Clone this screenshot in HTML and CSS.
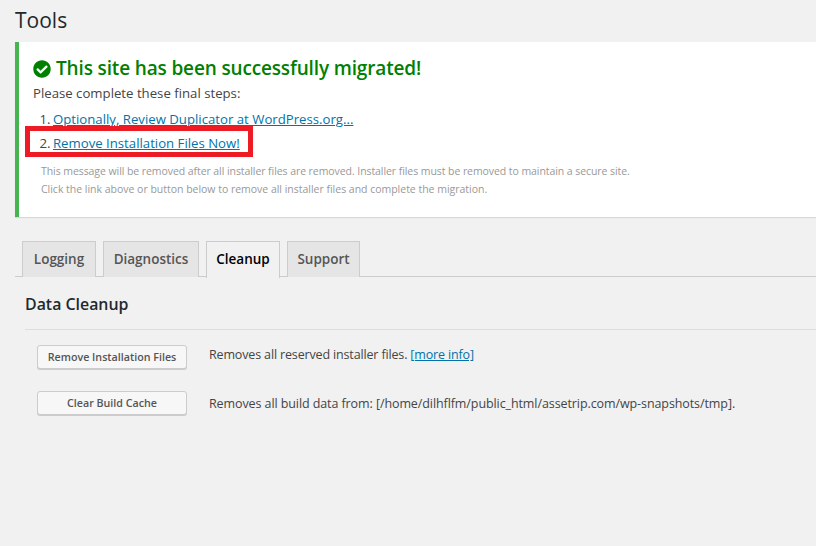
FILE: index.html
```html
<!DOCTYPE html>
<html lang="en">
<head>
<meta charset="utf-8">
<title>Tools</title>
<link rel="stylesheet" href="styles.css">
</head>
<body>
<div class="wrap">
  <h1 class="page-title">Tools</h1>
  <section class="notice">
    <h2 class="notice-title">
      <svg class="check" viewBox="0 0 512 512" aria-hidden="true"><path d="M504 256c0 137-111 248-248 248S8 393 8 256 119 8 256 8s248 111 248 248zM227.300 387.300l184-184c6.200-6.200 6.200-16.400 0-22.600l-22.600-22.600c-6.200-6.200-16.400-6.200-22.600 0L216 308.100l-70.100-70.100c-6.200-6.200-16.400-6.200-22.600 0l-22.600 22.600c-6.200 6.200-6.200 16.400 0 22.600l104 104c6.200 6.200 16.400 6.200 22.600 0z"/></svg>
      <span>This site has been successfully migrated!</span>
    </h2>
    <p class="notice-lead">Please complete these final steps:</p>
    <ol class="steps">
      <li><span class="num">1.</span> <a href="#">Optionally, Review Duplicator at WordPress.org...</a></li>
      <li class="highlighted"><span class="num">2.</span> <a href="#">Remove Installation Files Now!</a></li>
    </ol>
    <div class="fine">
      <p class="fine-line">This message will be removed after all installer files are removed. Installer files must be removed to maintain a secure site.</p>
      <p class="fine-line fine-line-wide">Click the link above or button below to remove all installer files and complete the migration.</p>
    </div>
  </section>
  <nav class="tabs">
    <a class="tab tab-logging" href="#">Logging</a>
    <a class="tab tab-diagnostics" href="#">Diagnostics</a>
    <a class="tab tab-cleanup active" href="#">Cleanup</a>
    <a class="tab tab-support" href="#">Support</a>
  </nav>
  <section class="panel">
    <h2 class="panel-title">Data Cleanup</h2>
    <div class="rows">
      <div class="row">
        <button class="btn" type="button">Remove Installation Files</button>
        <span class="desc desc-raised">Removes all reserved installer files. <a href="#">[more info]</a></span>
      </div>
      <div class="row">
        <button class="btn" type="button">Clear Build Cache</button>
        <span class="desc">Removes all build data from: [/home/dilhflfm/public_html/assetrip.com/wp-snapshots/tmp].</span>
      </div>
    </div>
  </section>
</div>
</body>
</html>
```

FILE: styles.css
```css
*, *::after { box-sizing: border-box; }
html, body { margin: 0; height: 100%; }
body {
  background: #f1f1f1;
  color: #444;
  font-family: "Open Sans", "Noto Sans", sans-serif;
  font-size: 13px;
  overflow: hidden;
}
.wrap { padding: 7px 0 0 15px; }
.page-title {
  margin: 0;
  height: 35px;
  font-size: 21px;
  line-height: 26px;
  font-weight: 400;
  color: #23282d;
}
.notice {
  background: #fff;
  border-left: 4px solid #46b450;
  box-shadow: 0 1px 1px rgba(0,0,0,.1);
  height: 175px;
  padding: 14px 14px 0 14px;
}
.notice-title {
  display: flex;
  align-items: center;
  gap: 5px;
  margin: 0;
  height: 25px;
  font-size: 19px;
  line-height: 25px;
  font-weight: 600;
  letter-spacing: -.15px;
  color: #008000;
}
.check { width: 18px; height: 18px; fill: #008000; flex: none; }
.notice-lead { margin: 0; padding-top: 2px; line-height: 20px; height: 24px; font-size: 13.2px; }
.steps { list-style: none; margin: 4px 0 0; padding: 0; }
.steps li { height: 24px; line-height: 20px; padding-left: 6.5px; color: #444; font-size: 13.2px; }
.num { margin-right: -1px; }
.steps .highlighted { position: relative; }
.highlighted::after {
  content: "";
  position: absolute;
  left: -8px;
  top: -7px;
  width: 228px;
  height: 31px;
  border: 5px solid #ed1c24;
  pointer-events: none;
}
a { color: #0073aa; }
.fine {
  margin: 5px 0 0 8px;
  font-size: 10.5px;
  line-height: 18px;
  color: #999;
  letter-spacing: -.07px;
}
.fine-line { margin: 0; }
.fine-line-wide { letter-spacing: -.015px; }
.tabs {
  display: flex;
  gap: 7px;
  margin-top: 24px;
  padding-left: 7px;
  border-bottom: 1px solid #ccc;
  height: 36px;
}
.tab {
  height: 36px;
  background: #e5e5e5;
  border: 1px solid #ccc;
  border-bottom: 0;
  color: #555;
  font-size: 13.5px;
  font-weight: 600;
  line-height: 35px;
  text-align: center;
  text-decoration: none;
}
.tab-logging { width: 74px; }
.tab-diagnostics { width: 96px; }
.tab-cleanup { width: 74px; }
.tab-support { width: 73px; }
.tab.active { background: #f1f1f1; color: #000; height: 37px; position: relative; }
.panel { padding-left: 10px; }
.panel-title {
  margin: 0;
  padding-top: 16px;
  height: 53px;
  border-bottom: 1px solid #ddd;
  font-size: 15.9px;
  line-height: 22px;
  font-weight: 600;
  color: #23282d;
}
.rows { padding: 15px 0 0 12px; display: flex; flex-direction: column; gap: 22px; }
.row { display: flex; align-items: center; height: 24px; }
.btn {
  width: 150px;
  height: 24px;
  padding: 0;
  background: #f7f7f7;
  border: 1px solid #ccc;
  border-radius: 3px;
  box-shadow: 0 1px 0 #ccc;
  color: #555;
  font-family: inherit;
  font-size: 10.7px;
  font-weight: 600;
  flex: none;
}
.desc { margin-left: 22px; font-size: 12.5px; color: #444; letter-spacing: -.09px; }
.desc-raised { margin-bottom: 6px; letter-spacing: -.15px; }
```
